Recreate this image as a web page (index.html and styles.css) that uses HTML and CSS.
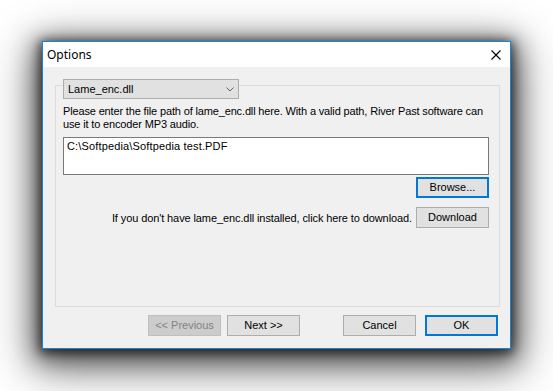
FILE: index.html
```html
<!DOCTYPE html>
<html>
<head>
<meta charset="utf-8">
<link rel="stylesheet" href="styles.css">
</head>
<body>
<div class="stage">
  <div class="window">
    <div class="titlebar">
      <span class="title">Options</span>
      <span class="close">
        <svg width="10" height="10" viewBox="0 0 10 10"><path d="M0.5 0.5 L9.5 9.5 M9.5 0.5 L0.5 9.5" stroke="#000" stroke-width="1.1" fill="none"/></svg>
      </span>
    </div>
    <div class="content">
      <div class="group">
        <div class="combo">
          <span>Lame_enc.dll</span>
          <svg width="8" height="5" viewBox="0 0 8 5"><path d="M0.5 0.5 L4 4 L7.5 0.5" stroke="#606060" stroke-width="1" fill="none"/></svg>
        </div>
        <p class="desc">Please enter the file path of lame_enc.dll here. With a valid path, River Past software can use it to encoder MP3 audio.</p>
        <div class="field">C:\Softpedia\Softpedia test.PDF</div>
        <div class="row-right">
          <button class="btn focused">Browse...</button>
        </div>
        <div class="row-right dl">
          <span class="dl-text">If you don't have lame_enc.dll installed, click here to download.</span>
          <button class="btn">Download</button>
        </div>
      </div>
      <div class="footer">
        <button class="btn disabled prev">&lt;&lt; Previous</button>
        <button class="btn next">Next &gt;&gt;</button>
        <button class="btn cancel">Cancel</button>
        <button class="btn focused ok">OK</button>
      </div>
    </div>
  </div>
</div>
</body>
</html>
```
FILE: styles.css
```css
html, body {
  margin: 0;
  padding: 0;
  background: #ffffff;
}
body {
  font-family: "Liberation Sans", Arial, sans-serif;
  font-size: 11px;
  color: #000;
  min-height: 391px;
}
.stage {
  padding: 41px 0 0 42px;
}
.window {
  width: 469px;
  height: 308px;
  box-sizing: border-box;
  border: 1px solid #1883d7;
  background: #f0f0f0;
  box-shadow: 0 2px 10px 2px rgba(0, 0, 0, 0.6), 0 6px 24px 6px rgba(0, 0, 0, 0.5), 0 12px 44px 8px rgba(0, 0, 0, 0.45);
  display: flex;
  flex-direction: column;
}
.titlebar {
  height: 25px;
  flex: none;
  background: #ffffff;
  display: flex;
  align-items: center;
  justify-content: space-between;
  padding: 0 9px 0 4px;
}
.title {
  font-family: "Noto Sans", "Open Sans", sans-serif;
  font-size: 12px;
  color: #000;
}
.close {
  display: flex;
  width: 10px;
  height: 10px;
  margin-top: 1px;
}
.content {
  padding: 18px 10px 0 12px;
}
.group {
  height: 222px;
  box-sizing: border-box;
  border: 1px solid #dcdcdc;
  padding: 0 10px 0 7px;
}
.combo {
  margin-top: -7px;
  width: 176px;
  height: 20px;
  box-sizing: border-box;
  border: 1px solid #adadad;
  background: #e1e1e1;
  display: flex;
  align-items: center;
  justify-content: space-between;
  padding: 0 4px 0 4px;
}
.desc {
  margin: 6px 0 0 0;
  line-height: 13px;
  letter-spacing: -0.15px;
}
.field {
  margin-top: 6px;
  height: 38px;
  box-sizing: border-box;
  border: 1px solid #7a7a7a;
  background: #ffffff;
  padding: 2px 3px;
  line-height: 13px;
  letter-spacing: 0.15px;
}
.row-right {
  display: flex;
  justify-content: flex-end;
  align-items: center;
  gap: 4px;
  margin-top: 2px;
}
.row-right.dl {
  margin-top: 9px;
}
.dl-text {
  letter-spacing: -0.1px;
}
.btn {
  font-family: "Liberation Sans", Arial, sans-serif;
  font-size: 11px;
  color: #000;
  width: 73px;
  height: 21px;
  box-sizing: border-box;
  border: 1px solid #adadad;
  background: #e1e1e1;
  padding: 0;
  margin: 0;
  line-height: 19px;
}
.btn.focused {
  border: 2px solid #0078d7;
  line-height: 17px;
}
.btn.disabled {
  background: #cccccc;
  border-color: #bfbfbf;
  color: #838383;
}
.footer {
  display: flex;
  margin-top: 8px;
}
.prev {
  margin-left: 93px;
}
.next {
  margin-left: 6px;
}
.cancel {
  margin-left: 43px;
}
.ok {
  margin-left: 9px;
}
```
